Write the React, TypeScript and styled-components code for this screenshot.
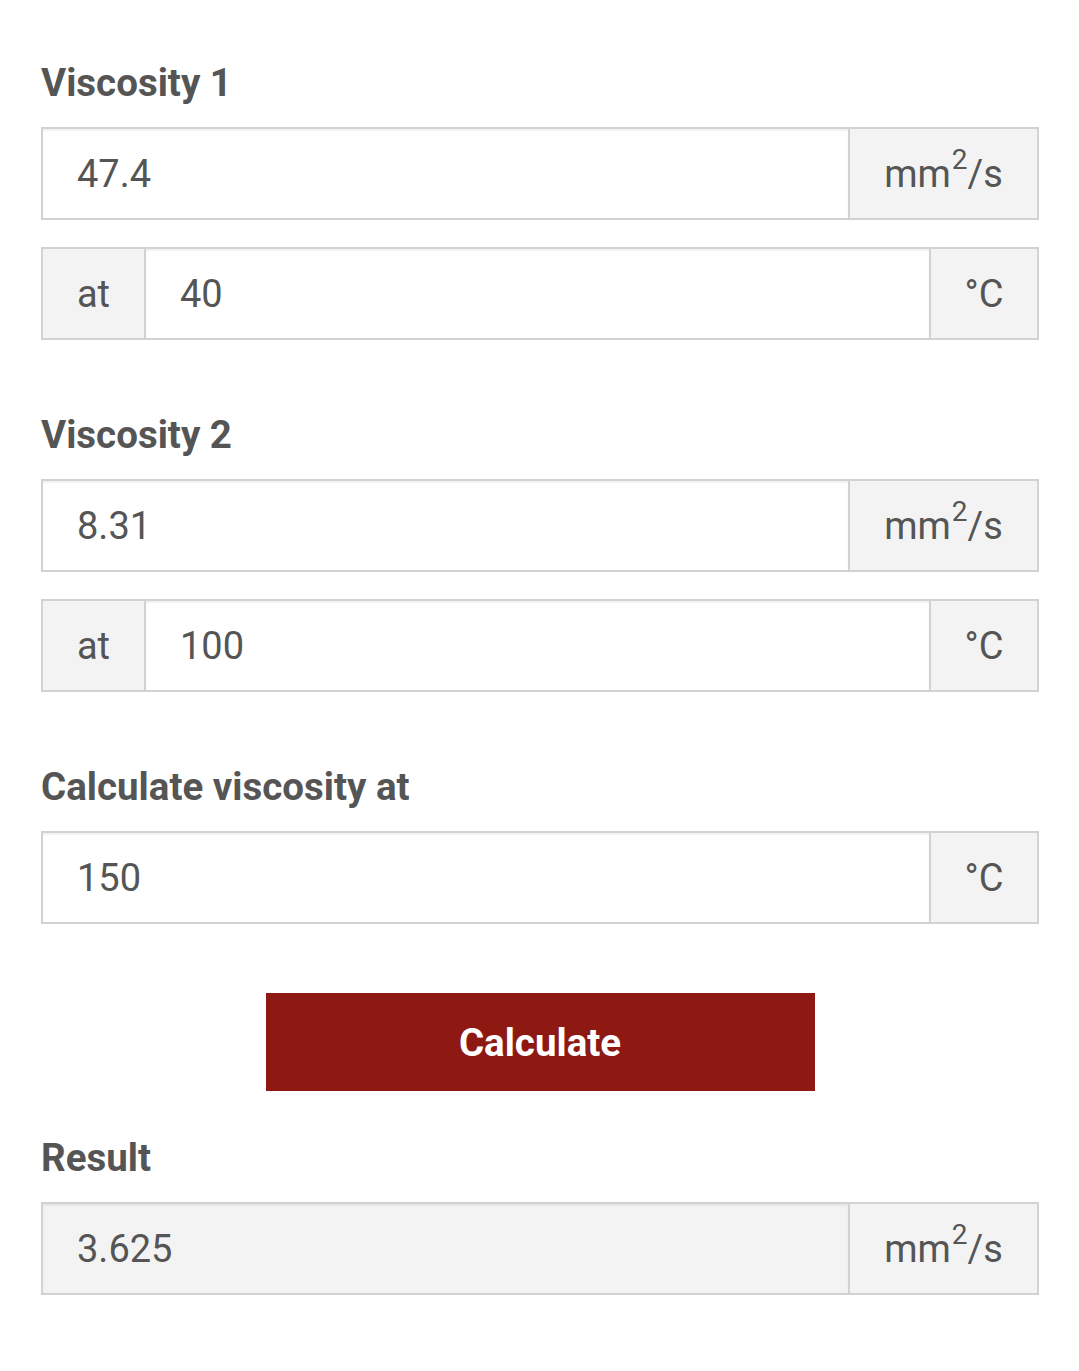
import styled, { createGlobalStyle } from "styled-components";

const Global = createGlobalStyle`
	body {
		margin: 0;
		background: #fff;
		font-family: Roboto, "Liberation Sans", sans-serif;
		color: #555;
	}
`;

const Page = styled.div`
	padding: 60px 40px 60px 41px;
	display: flex;
	flex-direction: column;
`;

const Section = styled.section`
	display: flex;
	flex-direction: column;
	gap: 27px;
	margin-bottom: ${(p: { $after?: number }) => p.$after ?? 72}px;
`;

const Label = styled.div`
	font-size: 38.5px;
	font-weight: 700;
	line-height: 46px;
	color: #555;
	margin-bottom: -6px;
`;

const Group = styled.div`
	display: flex;
	height: 93px;
	box-sizing: border-box;
	border: 2px solid #d2d2d2;
`;

const Field = styled.input<{ $readonly?: boolean }>`
	flex: 1;
	min-width: 0;
	border: none;
	outline: none;
	padding: 0 0 0 34px;
	margin: 0;
	font-family: inherit;
	font-size: 38px;
	color: #555;
	background: ${(p) => (p.$readonly ? "#f3f3f3" : "#fff")};
	box-shadow: inset 0 2px 2px rgba(0, 0, 0, 0.06);
`;

const Addon = styled.div<{ $width: number; $side: "left" | "right" }>`
	width: ${(p) => p.$width}px;
	flex-shrink: 0;
	box-sizing: border-box;
	display: flex;
	align-items: center;
	justify-content: center;
	background: #f3f3f3;
	font-size: 38px;
	color: #555;
	${(p) => (p.$side === "left" ? "border-right" : "border-left")}: 2px solid #d2d2d2;

	sup {
		font-size: 28px;
		line-height: 0;
		position: relative;
		top: -14px;
		vertical-align: baseline;
		margin-left: 1px;
	}
`;

const ButtonRow = styled.div`
	display: flex;
	justify-content: center;
	margin-bottom: 44px;
`;

const CalcButton = styled.button`
	width: 549px;
	height: 98px;
	border: none;
	background: #8d1912;
	color: #fff;
	font-family: inherit;
	font-size: 38.5px;
	font-weight: 700;
	cursor: pointer;
`;

const Mm2 = () => (
	<>
		mm<sup>2</sup>/s
	</>
);

export default function App() {
	return (
		<>
			<Global />
			<Page>
				<Section>
					<Label>Viscosity 1</Label>
					<Group>
						<Field defaultValue="47.4" />
						<Addon $width={189} $side="right"><Mm2 /></Addon>
					</Group>
					<Group>
						<Addon $width={103} $side="left">at</Addon>
						<Field defaultValue="40" />
						<Addon $width={108} $side="right">°C</Addon>
					</Group>
				</Section>
				<Section>
					<Label>Viscosity 2</Label>
					<Group>
						<Field defaultValue="8.31" />
						<Addon $width={189} $side="right"><Mm2 /></Addon>
					</Group>
					<Group>
						<Addon $width={103} $side="left">at</Addon>
						<Field defaultValue="100" />
						<Addon $width={108} $side="right">°C</Addon>
					</Group>
				</Section>
				<Section $after={69}>
					<Label>Calculate viscosity at</Label>
					<Group>
						<Field defaultValue="150" />
						<Addon $width={108} $side="right">°C</Addon>
					</Group>
				</Section>
				<ButtonRow>
					<CalcButton type="button">Calculate</CalcButton>
				</ButtonRow>
				<Section $after={0}>
					<Label>Result</Label>
					<Group>
						<Field $readonly readOnly defaultValue="3.625" />
						<Addon $width={189} $side="right"><Mm2 /></Addon>
					</Group>
				</Section>
			</Page>
		</>
	);
}
